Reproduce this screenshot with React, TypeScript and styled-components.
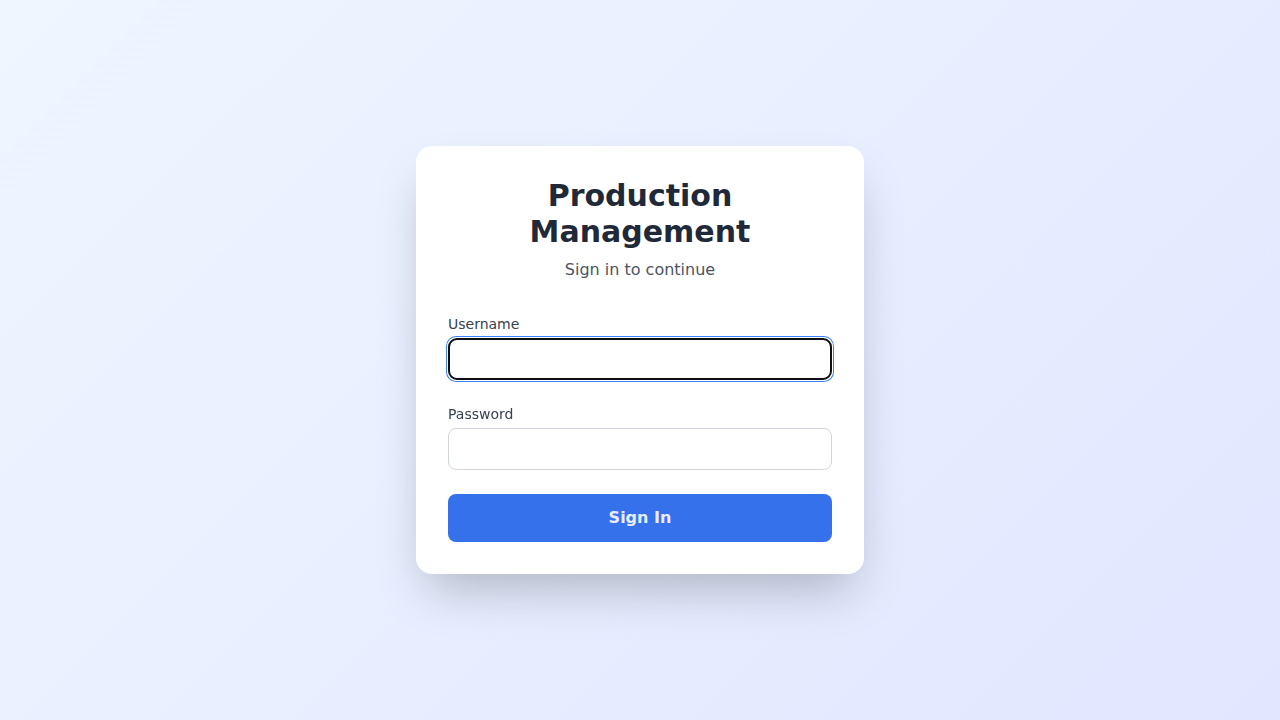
import { createGlobalStyle } from 'styled-components'
import styled from 'styled-components'

const GlobalStyle = createGlobalStyle`
  html, body {
    margin: 0;
    padding: 0;
  }
  body {
    font-family: 'DejaVu Sans', 'Liberation Sans', sans-serif;
  }
  * {
    box-sizing: border-box;
  }
`

const Page = styled.main`
  width: 100%;
  min-height: 100vh;
  display: flex;
  align-items: center;
  justify-content: center;
  background: linear-gradient(135deg, #eff6ff 0%, #e0e7ff 100%);
`

const Card = styled.div`
  width: 448px;
  padding: 32px;
  background: #ffffff;
  border-radius: 16px;
  box-shadow: 0 25px 50px -12px rgba(0, 0, 0, 0.25);
`

const Header = styled.div`
  text-align: center;
  margin-bottom: 32px;
`

const Title = styled.h1`
  margin: 0;
  font-size: 30px;
  line-height: 36px;
  font-weight: 700;
  color: #1f2937;
`

const Subtitle = styled.p`
  margin: 8px 0 0;
  font-size: 16px;
  line-height: 24px;
  color: #4b5563;
`

const Form = styled.form`
  display: flex;
  flex-direction: column;
  gap: 24px;
`

const Field = styled.div`
  display: flex;
  flex-direction: column;
  gap: 4px;
`

const Label = styled.label`
  font-size: 14px;
  line-height: 20px;
  font-weight: 500;
  color: #374151;
`

const Input = styled.input`
  height: 42px;
  padding: 8px 16px;
  border: 1px solid #d1d5db;
  border-radius: 8px;
  font-size: 16px;
  font-family: inherit;
  color: #111827;
  background: #fff;
  &:focus {
    border-color: #3b82f6;
    box-shadow: 0 0 0 2px #3b82f6;
  }
`

const Button = styled.button`
  height: 48px;
  padding: 0 0 2px;
  border: none;
  border-radius: 8px;
  background: #3671ec;
  color: #e6ecfb;
  font-family: inherit;
  font-size: 16px;
  font-weight: 700;
  cursor: pointer;
`

export default function App() {
  return (
    <>
      <GlobalStyle />
      <Page>
        <Card>
          <Header>
            <Title>
              Production
              <br />
              Management
            </Title>
            <Subtitle>Sign in to continue</Subtitle>
          </Header>
          <Form onSubmit={(e) => e.preventDefault()}>
            <Field>
              <Label htmlFor="username">Username</Label>
              <Input id="username" type="text" autoFocus />
            </Field>
            <Field>
              <Label htmlFor="password">Password</Label>
              <Input id="password" type="password" />
            </Field>
            <Button type="submit">Sign In</Button>
          </Form>
        </Card>
      </Page>
    </>
  )
}
